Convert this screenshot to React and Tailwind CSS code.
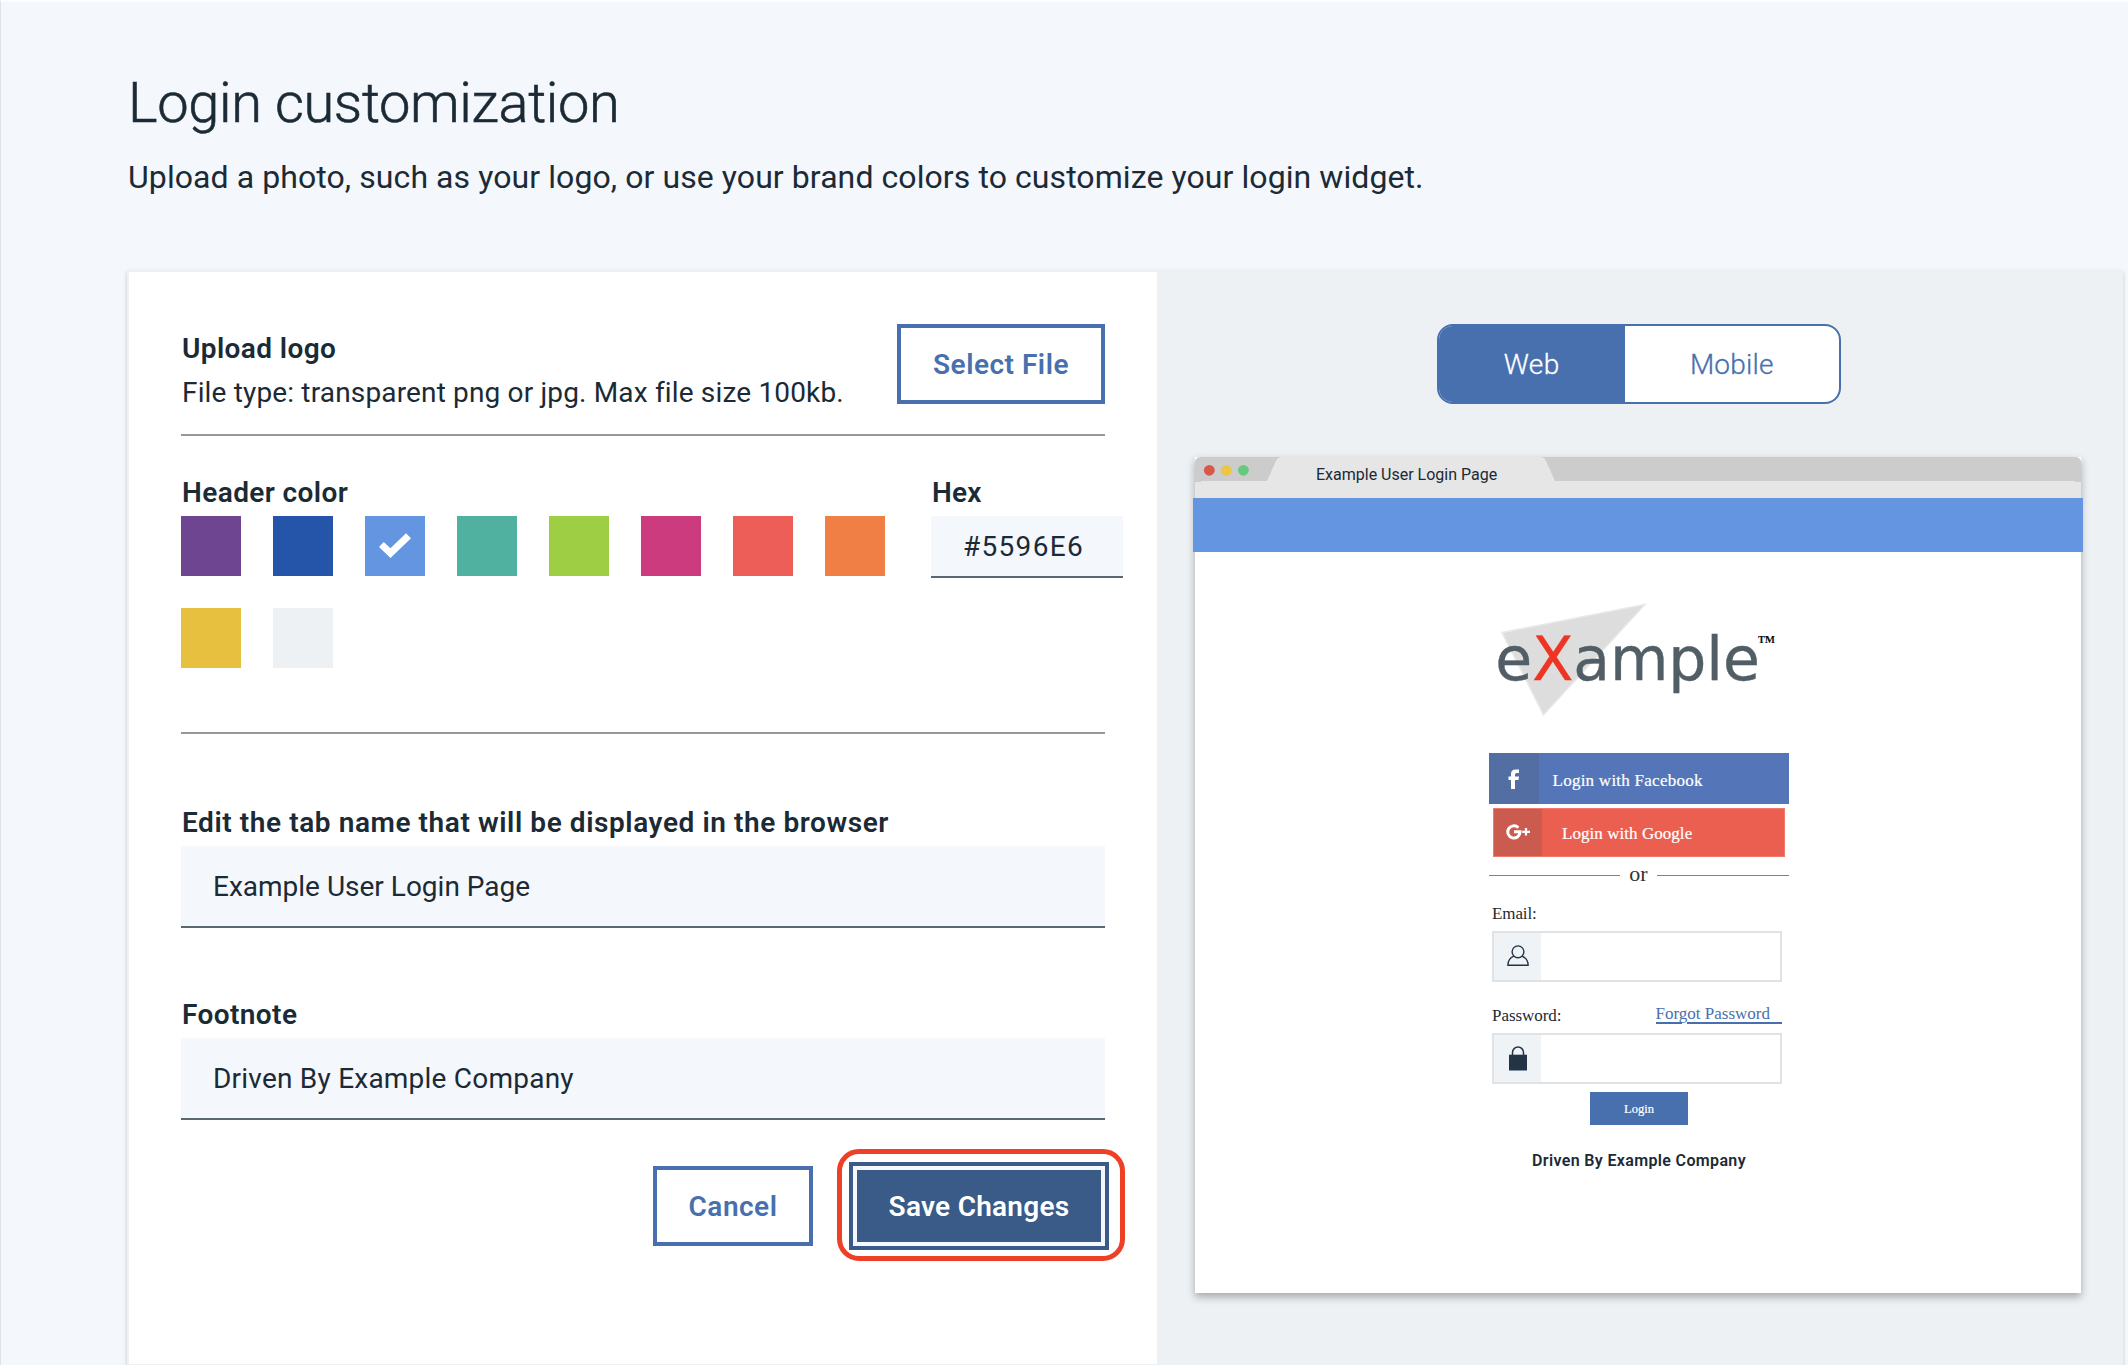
import React from "react";

const swatches = [
  "bg-[#6e4590]",
  "bg-[#2455a8]",
  "bg-[#6395e0]",
  "bg-[#50b1a0]",
  "bg-[#9dce44]",
  "bg-[#cb3b7e]",
  "bg-[#ed5e58]",
  "bg-[#f07f46]",
  "bg-[#e7c040]",
  "bg-[#edf1f4]",
];

function Label({ className, children }) {
  return (
    <div className={`pl-px text-[28px] leading-[36px] font-semibold whitespace-nowrap ${className}`}>
      {children}
    </div>
  );
}

function Field({ className, children }) {
  return (
    <div
      className={`h-[82px] border-b-2 border-[#5a6872] bg-[#f4f7fc] pl-8 text-[28px] leading-[81px] whitespace-nowrap ${className}`}
    >
      {children}
    </div>
  );
}

function Check() {
  return (
    <svg width="60" height="60" viewBox="0 0 60 60" aria-hidden="true">
      <path d="M14 31 L18.7 26 L25.5 32.3 L41 17.3 L46 22.2 L25.5 42 Z" fill="#fff" />
    </svg>
  );
}

function TabBar() {
  return (
    <svg className="block" width="886" height="41" viewBox="0 0 886 41" aria-hidden="true">
      <rect width="886" height="41" fill="#fff" />
      <path d="M0 6 Q0 0 6 0 H880 Q886 0 886 6 V41 H0 Z" fill="#e6e6e6" />
      <path d="M0 6 Q0 0 6 0 H86 Q82.500 0.500 81 4 L72 24 H6 V25 H0 Z" fill="#ccc" />
      <path d="M346 0 H880 Q886 0 886 6 V25 H880 V24 H360 L351 4 Q349.500 0.500 346 0 Z" fill="#ccc" />
      <circle cx="14.300" cy="13.300" r="5.400" fill="#da5748" />
      <circle cx="31.300" cy="13.300" r="5.400" fill="#eac645" />
      <circle cx="48.400" cy="13.300" r="5.400" fill="#65ca7b" />
    </svg>
  );
}

function CredentialBox({ className, children }) {
  return (
    <div className={`flex h-[51px] w-[290px] border-2 border-[#dfe3e6] ${className}`}>
      <div className="flex h-full w-[47px] items-center justify-center bg-[#eff3f6]">{children}</div>
    </div>
  );
}

function SettingsForm() {
  return (
    <section className="w-[1028px] bg-white pl-[52px]">
      <div className="flex h-[164px] w-[924px] justify-between border-b-2 border-[#979797] pt-[52px]">
        <div className="pt-[7px]">
          <Label className="tracking-[0.400px]">Upload logo</Label>
          <div className="mt-[8px] pl-px text-[28px] leading-[36px] tracking-[0.160px] whitespace-nowrap">
            File type: transparent png or jpg. Max file size 100kb.
          </div>
        </div>
        <button className="h-20 w-[208px] border-4 border-[#4870ae] pt-0.5 text-[28px] font-semibold tracking-[0.5px] text-[#4870ae]">
          Select File
        </button>
      </div>

      <div className="flex h-[296px] pt-[39px]">
        <div className="w-[750px]">
          <Label className="tracking-[0.400px]">Header color</Label>
          <div className="mt-[5px] flex flex-wrap gap-8">
            {swatches.map((color, i) => (
              <div key={color} className={`size-[60px] ${color}`}>
                {i === 2 && <Check />}
              </div>
            ))}
          </div>
        </div>
        <div className="w-[192px]">
          <Label className="tracking-[0.2px]">Hex</Label>
          <div className="mt-[5px] h-[62px] border-b-2 border-[#5a6872] bg-[#f4f7fc] pl-8 text-[28px] leading-[62px] tracking-[1.300px]">
            #5596E6
          </div>
        </div>
      </div>

      <div className="w-[924px] border-t-2 border-[#979797] pt-[71px]">
        <Label className="tracking-[0.580px]">
          Edit the tab name that will be displayed in the browser
        </Label>
        <Field className="mt-[5px]">Example User Login Page</Field>
        <Label className="mt-[69px] tracking-[0.400px]">Footnote</Label>
        <Field className="mt-[5px] tracking-[0.220px]">Driven By Example Company</Field>
        <div className="mt-[29px] -mr-5 flex items-center justify-end gap-6">
          <button className="mt-0.5 h-20 w-[160px] border-4 border-[#4870ae] pt-0.5 text-[28px] font-semibold tracking-[0.5px] text-[#4870ae]">
            Cancel
          </button>
          <div className="h-[112px] w-[288px] rounded-[22px] border-[5px] border-[#ee4026] py-[8px] pr-[11px] pl-[7px]">
            <button className="h-[88px] w-[260px] border-4 border-[#3a5a88] bg-[#f4f7fb] p-1">
              <span className="flex h-full items-center justify-center bg-[#3a5a88] pt-0.5 text-[28px] font-semibold tracking-[0.25px] text-white">
                Save Changes
              </span>
            </button>
          </div>
        </div>
      </div>
    </section>
  );
}

function Logo() {
  return (
    <svg className="block" width="300" height="140" viewBox="1489 592 300 140">
      <path d="M1502 632.500 L1645 604.500 L1543.500 715 Z" fill="#ddd" stroke="#e9e9e9" strokeWidth="1.500" />
      <text
        x="1495.300"
        y="679.500"
        textLength="264.500"
        fontFamily="DejaVu Sans, sans-serif"
        fontSize="60"
        fill="#525e66"
        stroke="#525e66"
        strokeWidth="0.400"
      >
        e<tspan fill="#ee3423" stroke="#ee3423">X</tspan>ample
      </text>
      <text x="1757.500" y="648" fontFamily="Liberation Serif, serif" fontWeight="700" fontSize="18" fill="#111">
        ™
      </text>
    </svg>
  );
}

function LoginPreview() {
  return (
    <div className="ml-[294px] flex w-[300px] flex-col font-['Liberation_Serif',serif] text-[17px] leading-5">
      <div className="mt-[40px]">
        <Logo />
      </div>

      <div className="mt-[21px] flex h-[51px] items-center bg-[#5476b9] text-white">
        <div className="flex h-full w-[50px] items-center justify-center bg-[#536ea3]">
          <svg width="12" height="20" viewBox="0 0 12 20" aria-hidden="true">
            <path d="M3 20 V11 H0.500 V7.400 H3 V5 Q3 0.500 7.500 0.500 H11 V4 H8.800 Q7 4 7 5.600 V7.400 H11 L10.500 11 H7 V20 Z" fill="#fff" />
          </svg>
        </div>
        <span className="pt-1 pl-[13.500px] tracking-[0.250px] [-webkit-text-stroke:0.2px]">Login with Facebook</span>
      </div>

      <div className="mt-1 ml-1 flex h-[49px] w-[292px] items-center border border-[#f0796d] bg-[#eb5f50] text-white">
        <div className="flex h-full w-[48px] items-center justify-center bg-[#cb5b4e]">
          <svg className="-mt-0.5" width="24" height="16" viewBox="0 0 24 16" fill="none" stroke="#fff" aria-hidden="true">
            <path d="M12.300 3.700 A6.100 6.100 0 1 0 14 7.800 H8" strokeWidth="3" />
            <path d="M20 4 V11.500 M16.200 7.800 H24" strokeWidth="2.200" />
          </svg>
        </div>
        <span className="pt-[3px] pl-[20px] tracking-[0.050px] [-webkit-text-stroke:0.2px]">Login with Google</span>
      </div>

      <div className="mt-[6px] flex h-6 items-center">
        <div className="h-px w-[131px] bg-[#828282]" />
        <div className="w-[37px] pb-0.5 text-center text-[22px] leading-6 tracking-[0.200px] text-[#333]">or</div>
        <div className="h-px flex-1 bg-[#828282]" />
      </div>

      <div className="mt-[17px] ml-[3px] leading-5 tracking-[-0.100px]">Email:</div>
      <CredentialBox className="mt-[7px] ml-[3px]">
        <svg className="mt-[-2px]" width="22" height="22" viewBox="0 0 22 22" fill="none" stroke="#223445" strokeWidth="1.400" aria-hidden="true">
          <circle cx="11" cy="6.800" r="5.900" />
          <path d="M7 11.200 C3 12.800 0.900 16 0.900 20.200 H21.100 C21.100 16 19 12.800 15 11.200" />
        </svg>
      </CredentialBox>

      <div className="mt-[22px] ml-[3px] flex h-[29px] items-start justify-between pr-[19px] leading-5">
        <span className="pt-[2px] tracking-[-0.050px]">Password:</span>
        <span className="relative text-[#4870ae]">
          Forgot Password
          <span className="absolute top-[18px] left-0 flex w-[126px] gap-[5px]">
            <span className="h-[1.500px] w-[26px] bg-[#4870ae]" />
            <span className="h-[1.500px] flex-1 bg-[#4870ae]" />
          </span>
        </span>
      </div>
      <CredentialBox className="ml-[3px]">
        <svg className="mt-[-1px]" width="18" height="25" viewBox="0 0 18 25" aria-hidden="true">
          <path d="M3.500 10 V6.500 A5.500 5.500 0 0 1 14.500 6.500 V10" fill="none" stroke="#223445" strokeWidth="1.500" />
          <rect y="8.700" width="18" height="15.800" fill="#223445" />
        </svg>
      </CredentialBox>

      <div className="mt-2 ml-[101px] h-[33px] w-[98px] bg-[#4870ae] text-center text-[12.500px] leading-[34px] text-white [-webkit-text-stroke:0.2px]">
        Login
      </div>
      <div className="mt-[25px] text-center font-[Roboto,sans-serif] text-[16px] leading-[22px] font-semibold tracking-[0.350px]">
        Driven By Example Company
      </div>
    </div>
  );
}

function Preview() {
  return (
    <section className="flex-1 bg-[#edf1f4] pt-[52px]">
      <div className="ml-[280px] flex h-20 w-[404px] overflow-hidden rounded-2xl border-2 border-[#4870ae] bg-white text-[28px] leading-[77px] font-light [-webkit-text-stroke:0.3px]">
        <div className="w-[185.500px] bg-[#4870ae] text-center tracking-[0.400px] text-white">Web</div>
        <div className="flex-1 text-center tracking-[0.200px] text-[#4870ae]">Mobile</div>
      </div>
      <div className="mt-[53px] ml-[38px] h-[836px] w-[886px] bg-white shadow-[0_4px_8px_rgba(0,0,0,0.3)]">
        <div className="relative">
          <TabBar />
          <div className="absolute top-[7px] left-[121px] text-[16px] leading-[21px] whitespace-nowrap">
            Example User Login Page
          </div>
        </div>
        <div className="-mx-0.5 h-[54px] bg-[#6395e0]" />
        <LoginPreview />
      </div>
    </section>
  );
}

export default function App() {
  return (
    <div className="h-[1365px] w-[2128px] overflow-hidden border-t-2 border-l border-t-[#fcfdfe] border-l-[#dfe3e8] bg-[#f4f7fc] font-[Roboto,sans-serif] text-[#1b2a35]">
      <header className="pt-[69px] pl-[127px]">
        <h1 className="text-[56px] leading-[64px] font-light tracking-[-0.350px] [-webkit-text-stroke:0.6px]">
          Login customization
        </h1>
        <p className="mt-5 text-[32px] leading-[44px] tracking-[0.08px]">
          Upload a photo, such as your logo, or use your brand colors to customize your login widget.
        </p>
      </header>
      <main className="mt-[71px] ml-[126px] flex h-[1096px] w-[1996px] border-2 border-r-0 border-[#edf1f4] shadow-[0_2px_4px_rgba(0,0,0,0.2)]">
        <SettingsForm />
        <Preview />
      </main>
    </div>
  );
}
